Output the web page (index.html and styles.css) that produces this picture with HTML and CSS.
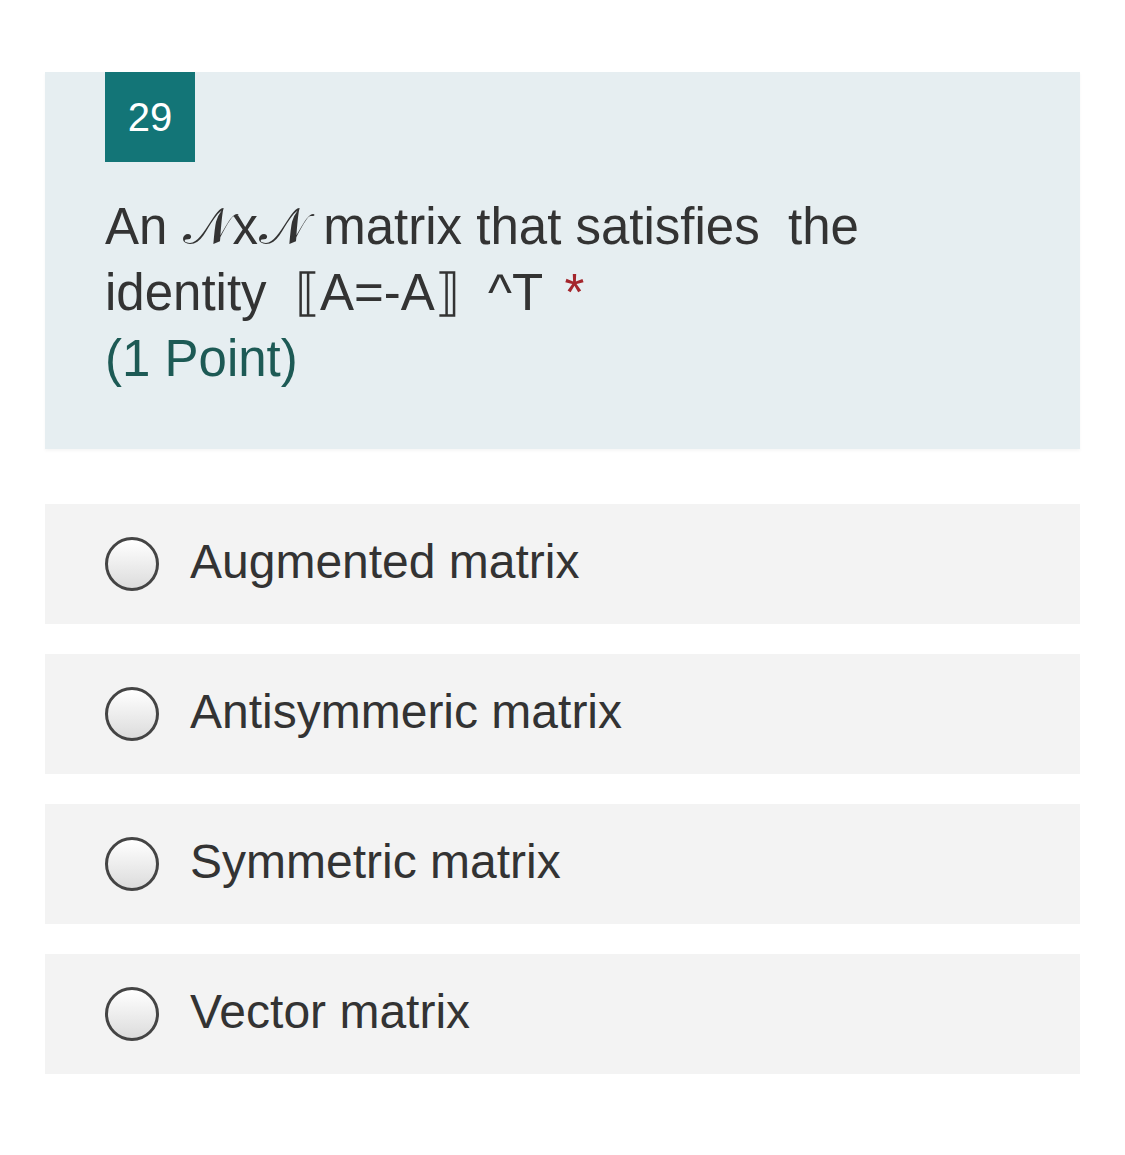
FILE: index.html
```html
<!DOCTYPE html>
<html>
<head>
<meta charset="utf-8">
<link rel="stylesheet" href="styles.css">
</head>
<body>
<div class="page">
  <div class="question">
    <div class="badge">29</div>
    <div class="qtext">
      An <span class="scr">𝒩</span>x<span class="scr">𝒩</span> matrix that satisfies&nbsp; the<br>
      identity &nbsp;⟦A=-A⟧ &nbsp;^T <span class="req">*</span><br>
      <span class="points">(1 Point)</span>
    </div>
  </div>
  <div class="options">
    <div class="option"><span class="radio"></span><span class="label">Augmented matrix</span></div>
    <div class="option"><span class="radio"></span><span class="label">Antisymmeric matrix</span></div>
    <div class="option"><span class="radio"></span><span class="label">Symmetric matrix</span></div>
    <div class="option"><span class="radio"></span><span class="label">Vector matrix</span></div>
  </div>
</div>
</body>
</html>
```
FILE: styles.css
```css
html, body {
  margin: 0;
  padding: 0;
  background: #ffffff;
}
.page {
  padding: 72px 45px 0 45px;
  font-family: "Liberation Sans", Arial, sans-serif;
  color: #333333;
}
.question {
  background: #e6eef1;
  padding: 0 60px 57px 60px;
  box-shadow: 0 2px 3px rgba(0,0,0,0.04);
}
.badge {
  width: 90px;
  height: 90px;
  background: #137577;
  color: #ffffff;
  font-size: 40px;
  display: flex;
  align-items: center;
  justify-content: center;
}
.qtext {
  margin-top: 32px;
  font-size: 51px;
  line-height: 66px;
  color: #333333;
}
.scr {
  font-style: normal;
  display: inline-block;
  padding: 0 1px;
}
.req {
  color: #a4262c;
  margin-left: 8px;
}
.points {
  color: #1d5a55;
}
.options {
  margin-top: 55px;
  display: flex;
  flex-direction: column;
  gap: 30px;
}
.option {
  background: #f3f3f3;
  height: 120px;
  display: flex;
  align-items: center;
  padding-left: 60px;
}
.radio {
  width: 48px;
  height: 48px;
  border: 3px solid #444444;
  border-radius: 50%;
  background: linear-gradient(#ffffff, #dcdcdc);
  flex: none;
}
.label {
  margin-left: 31px;
  font-size: 48px;
  color: #333333;
  margin-top: -5px;
}
```
